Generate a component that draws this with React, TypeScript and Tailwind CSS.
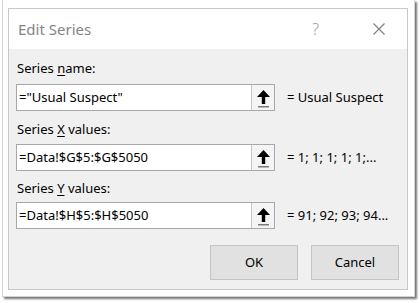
import React from "react";

const font = { fontFamily: '"Noto Sans", "Open Sans", sans-serif' };

function RefButton() {
  return (
    <div className="w-[23px] h-full flex flex-col items-center justify-center bg-[#f4f4f4] border-l border-[#c6c6c6]">
      <svg width="15" height="20" viewBox="0 0 15 20">
        <path d="M7.5 2 L14 9 L9.2 9 L9.2 16 L5.8 16 L5.8 9 L1 9 Z" fill="#000" />
        <rect x="2" y="18" width="11" height="1.5" fill="#7a7a7a" />
      </svg>
    </div>
  );
}

function Field({ value, result }: { value: string; result: string }) {
  return (
    <div className="flex items-center h-[27px]">
      <div className="w-[259px] h-full flex border border-[#a8a8a8] bg-white">
        <div className="flex-1 flex items-center pl-[2px] text-[13px] text-black leading-none">{value}</div>
        <RefButton />
      </div>
      <div className="ml-[12px] text-[13px] text-black">{result}</div>
    </div>
  );
}

function Label({ pre, u, post }: { pre: string; u: string; post: string }) {
  return (
    <div className="h-[20px] pl-[1px] leading-[20px] text-[13px] text-black whitespace-pre">
      {pre}
      <span className="underline underline-offset-2">{u}</span>
      {post}
    </div>
  );
}

export default function App() {
  return (
    <div className="w-[420px] h-[303px] bg-white overflow-hidden" style={font}>
      <div className="ml-[2px] w-[413px] h-[297px] bg-white border-l border-r border-b border-[#d4d4d4] shadow-[2px_2px_2px_rgba(0,0,0,0.55)] pt-[8px] pl-[5px]">
        <div className="w-[400px] h-[282px] border border-[#c8c8c8] flex flex-col">
          {/* Title bar */}
          <div className="h-[40px] bg-white flex items-center pl-[9px] pr-[22px]">
            <span className="text-[15px] text-[#858585]">Edit Series</span>
            <span className="ml-auto text-[16px] text-[#9a9a9a] font-light">?</span>
            <svg className="ml-[54px]" width="12" height="12" viewBox="0 0 12 12">
              <path d="M0.5 0.5 L11.5 11.5 M11.5 0.5 L0.5 11.5" stroke="#808080" strokeWidth="1.2" />
            </svg>
          </div>
          {/* Body */}
          <div className="flex-1 bg-[#f0f0f0] pl-[7px] pr-[8px] pt-[9px] flex flex-col">
            <Label pre="Series " u="n" post="ame:" />
            <div className="mt-[6px]">
              <Field value={'="Usual Suspect"'} result="= Usual Suspect" />
            </div>
            <div className="mt-[8px]">
              <Label pre="Series " u="X" post=" values:" />
            </div>
            <div className="mt-[5px]">
              <Field value="=Data!$G$5:$G$5050" result="= 1; 1; 1; 1; 1;..." />
            </div>
            <div className="mt-[7px]">
              <Label pre="Series " u="Y" post=" values:" />
            </div>
            <div className="mt-[4px]">
              <Field value="=Data!$H$5:$H$5050" result="= 91; 92; 93; 94..." />
            </div>
            <div className="mt-[16px] flex justify-end gap-[13px]">
              <button className="w-[88px] h-[35px] bg-[#e1e1e1] border border-[#c4c4c4] text-[13px] text-black">OK</button>
              <button className="w-[88px] h-[35px] bg-[#e1e1e1] border border-[#c4c4c4] text-[13px] text-black">Cancel</button>
            </div>
          </div>
        </div>
      </div>
    </div>
  );
}
